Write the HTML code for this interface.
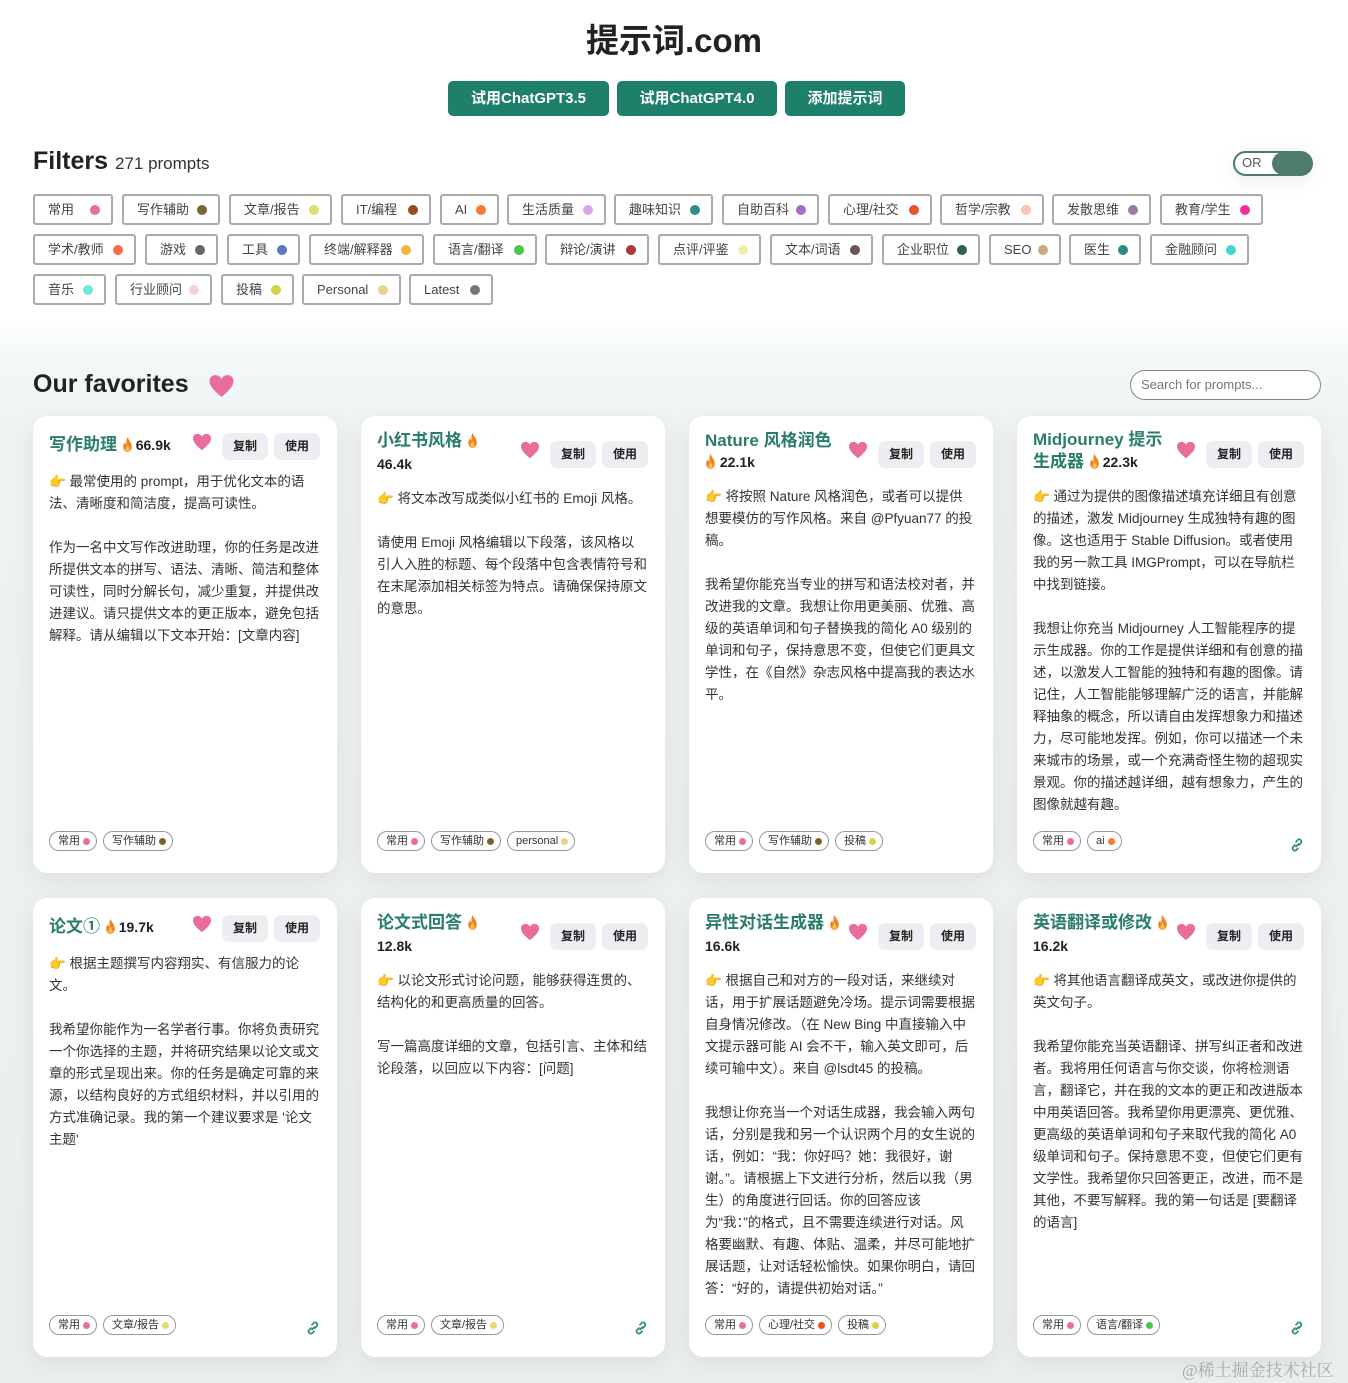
<!DOCTYPE html>
<html><head><meta charset="utf-8">
<style>
*{box-sizing:border-box;margin:0;padding:0}
body{width:1348px;height:1383px;overflow:hidden;font-family:"Liberation Sans","Noto Sans CJK SC",sans-serif;color:#222;background:#fff;position:relative}
.abs{position:absolute}
h1{position:absolute;left:0;width:1348px;top:14px;text-align:center;font-size:33px;font-weight:bold;color:#222}
.gbtn{position:absolute;top:81px;height:35px;background:#1e7f6b;color:#fff;border-radius:5px;font-size:15px;font-weight:bold;text-align:center;line-height:35px}
.chip{position:absolute;height:31px;border:2px solid #aaa;border-radius:3px;font-size:13px;color:#444;line-height:27px;padding-left:13px;background:#fff;white-space:nowrap}
.chip i{position:absolute;right:11px;top:9px;width:10px;height:10px;border-radius:50%}
.bg{position:absolute;left:0;top:320px;width:1348px;height:1063px;background:linear-gradient(#fff,#f3f8f8 40px,#eef2f2 120px,#eaeeee)}
.card{position:absolute;width:304px;background:#fff;border-radius:14px;box-shadow:0 6px 24px rgba(0,0,0,0.07)}
.t{position:absolute;left:16px;font-size:17px;font-weight:bold;color:#2a7d68;line-height:24px;white-space:nowrap}
.n{font-size:14px;color:#222;font-weight:bold;margin-left:3px}
.cnt{position:absolute;left:16px;font-size:14px;font-weight:bold;color:#222}
.heart{position:absolute;width:20px;height:18px}
.b{position:absolute;width:46px;height:27px;background:#eceef1;border-radius:7px;font-size:12px;font-weight:bold;text-align:center;line-height:27px;color:#222}
.d{position:absolute;left:16px;width:270px;font-size:13.5px;line-height:22px;color:#333}
.d p{margin-bottom:22px}
.tags{position:absolute;left:16px;display:flex;gap:6px}
.tag{height:20px;border:1px solid #999;border-radius:10px;font-size:11px;line-height:18px;padding:0 16px 0 8px;position:relative;color:#333;white-space:nowrap}
.tag i{position:absolute;right:6px;top:6px;width:7px;height:7px;border-radius:50%}
.link{position:absolute;right:16px;width:16px;height:16px}
</style></head><body>
<h1>提示词.com</h1>
<div class="gbtn" style="left:448px;width:161px">试用ChatGPT3.5</div>
<div class="gbtn" style="left:617px;width:160px">试用ChatGPT4.0</div>
<div class="gbtn" style="left:785px;width:120px">添加提示词</div>

<div class="abs" style="left:33px;top:147px;font-size:25px;font-weight:bold;color:#222">Filters <span style="font-size:17px;font-weight:normal;color:#333">271 prompts</span></div>
<div class="abs" style="left:1233px;top:151px;width:80px;height:25px;border:2px solid #4d7c6d;border-radius:13px;background:#fff;box-shadow:0 4px 20px rgba(0,0,0,0.08)"><span style="position:absolute;left:7px;top:2px;font-size:13px;color:#555">OR</span><span style="position:absolute;right:-1px;top:-1px;width:40px;height:23px;border-radius:12px;background:#4d7c6d"></span></div>

<div class="chip" style="left:33px;top:194px;width:80px">常用<i style="background:#e86c9c"></i></div>
<div class="chip" style="left:122px;top:194px;width:98px">写作辅助<i style="background:#7a6535"></i></div>
<div class="chip" style="left:229px;top:194px;width:103px">文章/报告<i style="background:#e1dd6e"></i></div>
<div class="chip" style="left:341px;top:194px;width:90px">IT/编程<i style="background:#9a4a20"></i></div>
<div class="chip" style="left:440px;top:194px;width:59px">AI<i style="background:#f57c2e"></i></div>
<div class="chip" style="left:507px;top:194px;width:99px">生活质量<i style="background:#d7a6e6"></i></div>
<div class="chip" style="left:614px;top:194px;width:99px">趣味知识<i style="background:#2c8f8a"></i></div>
<div class="chip" style="left:722px;top:194px;width:97px">自助百科<i style="background:#a46cc6"></i></div>
<div class="chip" style="left:828px;top:194px;width:104px">心理/社交<i style="background:#ec5128"></i></div>
<div class="chip" style="left:940px;top:194px;width:104px">哲学/宗教<i style="background:#f6c8ae"></i></div>
<div class="chip" style="left:1052px;top:194px;width:99px">发散思维<i style="background:#977ca7"></i></div>
<div class="chip" style="left:1160px;top:194px;width:103px">教育/学生<i style="background:#f0309a"></i></div>

<div class="chip" style="left:33px;top:234px;width:103px">学术/教师<i style="background:#f56e43"></i></div>
<div class="chip" style="left:145px;top:234px;width:73px">游戏<i style="background:#666"></i></div>
<div class="chip" style="left:227px;top:234px;width:73px">工具<i style="background:#5a78c0"></i></div>
<div class="chip" style="left:309px;top:234px;width:115px">终端/解释器<i style="background:#f7b03a"></i></div>
<div class="chip" style="left:433px;top:234px;width:104px">语言/翻译<i style="background:#49c64d"></i></div>
<div class="chip" style="left:545px;top:234px;width:104px">辩论/演讲<i style="background:#a83a3a"></i></div>
<div class="chip" style="left:658px;top:234px;width:103px">点评/评鉴<i style="background:#eef0a8"></i></div>
<div class="chip" style="left:770px;top:234px;width:103px">文本/词语<i style="background:#6a5550"></i></div>
<div class="chip" style="left:882px;top:234px;width:98px">企业职位<i style="background:#2d6250"></i></div>
<div class="chip" style="left:989px;top:234px;width:72px">SEO<i style="background:#c6ad80"></i></div>
<div class="chip" style="left:1069px;top:234px;width:72px">医生<i style="background:#2c8a84"></i></div>
<div class="chip" style="left:1150px;top:234px;width:99px">金融顾问<i style="background:#3fd7c7"></i></div>

<div class="chip" style="left:33px;top:274px;width:73px">音乐<i style="background:#6ee8dd"></i></div>
<div class="chip" style="left:115px;top:274px;width:97px">行业顾问<i style="background:#fbd0d4"></i></div>
<div class="chip" style="left:221px;top:274px;width:73px">投稿<i style="background:#d6d345"></i></div>
<div class="chip" style="left:302px;top:274px;width:99px">Personal<i style="background:#ead28a"></i></div>
<div class="chip" style="left:409px;top:274px;width:84px">Latest<i style="background:#777"></i></div>

<div class="bg"></div>
<div class="abs" style="left:33px;top:370px;font-size:25px;font-weight:bold;color:#222">Our favorites</div>
<svg class="abs" style="left:208px;top:374px" width="27" height="24" viewBox="0 0 24 22"><path d="M12 21 C5 15 1 11 1 6.5 1 3 3.5 1 6.5 1 9 1 11 2.5 12 4.5 13 2.5 15 1 17.5 1 20.5 1 23 3 23 6.5 23 11 19 15 12 21Z" fill="#e86c9c"/></svg>
<div class="abs" style="left:1130px;top:370px;width:191px;height:30px;border:1px solid #888;border-radius:15px;background:#fff;font-size:13px;color:#777;line-height:28px;padding-left:10px">Search for prompts...</div>

<svg width="0" height="0" style="position:absolute"><defs>
<symbol id="h" viewBox="0 0 24 22"><path d="M12 21 C5 15 1 11 1 6.5 1 3 3.5 1 6.5 1 9 1 11 2.5 12 4.5 13 2.5 15 1 17.5 1 20.5 1 23 3 23 6.5 23 11 19 15 12 21Z" fill="#e86c9c"/></symbol>
<symbol id="f" viewBox="0 0 10 14"><path d="M5 0 C6 3 9 5 9 9 9 12 7 14 5 14 3 14 1 12 1 9 1 7 2 6 3 5 3 7 4 7 4 7 4 4 4 2 5 0Z" fill="#f2811f"/><path d="M5 7 C6 9 7 10 7 11.5 7 13 6 13.5 5 13.5 4 13.5 3 13 3 11.5 3 10 4.5 9 5 7Z" fill="#fbc04a"/></symbol>
<symbol id="l" viewBox="0 0 16 16"><g fill="none" stroke="#2a8a6d" stroke-width="1.6" stroke-linecap="round"><path d="M7 9.5 L9.5 7"/><path d="M6 8 L4 10 A2.3 2.3 0 0 0 7.2 13.2 L9 11.2"/><path d="M10 8 L12 6 A2.3 2.3 0 0 0 8.8 2.8 L7 4.8"/></g></symbol>
</defs></svg>

<!-- Row 1 -->
<div class="card" style="left:33px;top:416px;height:457px">
<div class="t" style="top:17px">写作助理 <svg width="11" height="15" style="vertical-align:-2px"><use href="#f"/></svg><span class="n">66.9k</span></div>
<svg class="heart" style="left:159px;top:17px"><use href="#h"/></svg>
<div class="b" style="left:189px;top:17px">复制</div><div class="b" style="left:241px;top:17px">使用</div>
<div class="d" style="top:55px"><p>👉 最常使用的 prompt，用于优化文本的语法、清晰度和简洁度，提高可读性。</p><p>作为一名中文写作改进助理，你的任务是改进所提供文本的拼写、语法、清晰、简洁和整体可读性，同时分解长句，减少重复，并提供改进建议。请只提供文本的更正版本，避免包括解释。请从编辑以下文本开始：[文章内容]</p></div>
<div class="tags" style="top:415px"><span class="tag">常用<i style="background:#e86c9c"></i></span><span class="tag">写作辅助<i style="background:#7a6535"></i></span></div>
</div>

<div class="card" style="left:361px;top:416px;height:457px">
<div class="t" style="top:13px">小红书风格 <svg width="11" height="15" style="vertical-align:-2px"><use href="#f"/></svg></div>
<div class="cnt" style="top:40px">46.4k</div>
<svg class="heart" style="left:159px;top:25px"><use href="#h"/></svg>
<div class="b" style="left:189px;top:25px">复制</div><div class="b" style="left:241px;top:25px">使用</div>
<div class="d" style="top:72px"><p>👉 将文本改写成类似小红书的 Emoji 风格。</p><p>请使用 Emoji 风格编辑以下段落，该风格以引人入胜的标题、每个段落中包含表情符号和在末尾添加相关标签为特点。请确保保持原文的意思。</p></div>
<div class="tags" style="top:415px"><span class="tag">常用<i style="background:#e86c9c"></i></span><span class="tag">写作辅助<i style="background:#7a6535"></i></span><span class="tag">personal<i style="background:#ead28a"></i></span></div>
</div>

<div class="card" style="left:689px;top:416px;height:457px">
<div class="t" style="top:13px">Nature 风格润色</div>
<div class="cnt" style="top:38px"><svg width="11" height="15" style="vertical-align:-2px"><use href="#f"/></svg> 22.1k</div>
<svg class="heart" style="left:159px;top:25px"><use href="#h"/></svg>
<div class="b" style="left:189px;top:25px">复制</div><div class="b" style="left:241px;top:25px">使用</div>
<div class="d" style="top:70px"><p>👉 将按照 Nature 风格润色，或者可以提供想要模仿的写作风格。来自 @Pfyuan77 的投稿。</p><p>我希望你能充当专业的拼写和语法校对者，并改进我的文章。我想让你用更美丽、优雅、高级的英语单词和句子替换我的简化 A0 级别的单词和句子，保持意思不变，但使它们更具文学性，在《自然》杂志风格中提高我的表达水平。</p></div>
<div class="tags" style="top:415px"><span class="tag">常用<i style="background:#e86c9c"></i></span><span class="tag">写作辅助<i style="background:#7a6535"></i></span><span class="tag">投稿<i style="background:#d6d345"></i></span></div>
</div>

<div class="card" style="left:1017px;top:416px;height:457px">
<div class="t" style="top:13px;line-height:22px">Midjourney 提示<br>生成器 <svg width="11" height="15" style="vertical-align:-2px"><use href="#f"/></svg><span class="n">22.3k</span></div>
<svg class="heart" style="left:159px;top:25px"><use href="#h"/></svg>
<div class="b" style="left:189px;top:25px">复制</div><div class="b" style="left:241px;top:25px">使用</div>
<div class="d" style="top:70px"><p>👉 通过为提供的图像描述填充详细且有创意的描述，激发 Midjourney 生成独特有趣的图像。这也适用于 Stable Diffusion。或者使用我的另一款工具 IMGPrompt，可以在导航栏中找到链接。</p><p>我想让你充当 Midjourney 人工智能程序的提示生成器。你的工作是提供详细和有创意的描述，以激发人工智能的独特和有趣的图像。请记住，人工智能能够理解广泛的语言，并能解释抽象的概念，所以请自由发挥想象力和描述力，尽可能地发挥。例如，你可以描述一个未来城市的场景，或一个充满奇怪生物的超现实景观。你的描述越详细，越有想象力，产生的图像就越有趣。</p></div>
<div class="tags" style="top:415px"><span class="tag">常用<i style="background:#e86c9c"></i></span><span class="tag">ai<i style="background:#f57c2e"></i></span></div>
<svg class="link" style="top:421px"><use href="#l"/></svg>
</div>

<!-- Row 2 -->
<div class="card" style="left:33px;top:898px;height:459px">
<div class="t" style="top:17px">论文① <svg width="11" height="15" style="vertical-align:-2px"><use href="#f"/></svg><span class="n">19.7k</span></div>
<svg class="heart" style="left:159px;top:17px"><use href="#h"/></svg>
<div class="b" style="left:189px;top:17px">复制</div><div class="b" style="left:241px;top:17px">使用</div>
<div class="d" style="top:55px"><p>👉 根据主题撰写内容翔实、有信服力的论文。</p><p>我希望你能作为一名学者行事。你将负责研究一个你选择的主题，并将研究结果以论文或文章的形式呈现出来。你的任务是确定可靠的来源，以结构良好的方式组织材料，并以引用的方式准确记录。我的第一个建议要求是 '论文主题'</p></div>
<div class="tags" style="top:417px"><span class="tag">常用<i style="background:#e86c9c"></i></span><span class="tag">文章/报告<i style="background:#e1dd6e"></i></span></div>
<svg class="link" style="top:422px"><use href="#l"/></svg>
</div>

<div class="card" style="left:361px;top:898px;height:459px">
<div class="t" style="top:13px">论文式回答 <svg width="11" height="15" style="vertical-align:-2px"><use href="#f"/></svg></div>
<div class="cnt" style="top:40px">12.8k</div>
<svg class="heart" style="left:159px;top:25px"><use href="#h"/></svg>
<div class="b" style="left:189px;top:25px">复制</div><div class="b" style="left:241px;top:25px">使用</div>
<div class="d" style="top:72px"><p>👉 以论文形式讨论问题，能够获得连贯的、结构化的和更高质量的回答。</p><p>写一篇高度详细的文章，包括引言、主体和结论段落，以回应以下内容：[问题]</p></div>
<div class="tags" style="top:417px"><span class="tag">常用<i style="background:#e86c9c"></i></span><span class="tag">文章/报告<i style="background:#e1dd6e"></i></span></div>
<svg class="link" style="top:422px"><use href="#l"/></svg>
</div>

<div class="card" style="left:689px;top:898px;height:459px">
<div class="t" style="top:13px">异性对话生成器 <svg width="11" height="15" style="vertical-align:-2px"><use href="#f"/></svg></div>
<div class="cnt" style="top:40px">16.6k</div>
<svg class="heart" style="left:159px;top:25px"><use href="#h"/></svg>
<div class="b" style="left:189px;top:25px">复制</div><div class="b" style="left:241px;top:25px">使用</div>
<div class="d" style="top:72px"><p>👉 根据自己和对方的一段对话，来继续对话，用于扩展话题避免冷场。提示词需要根据自身情况修改。（在 New Bing 中直接输入中文提示器可能 AI 会不干，输入英文即可，后续可输中文）。来自 @lsdt45 的投稿。</p><p>我想让你充当一个对话生成器，我会输入两句话，分别是我和另一个认识两个月的女生说的话，例如：“我：你好吗？她：我很好，谢谢。”。请根据上下文进行分析，然后以我（男生）的角度进行回话。你的回答应该为“我：”的格式，且不需要连续进行对话。风格要幽默、有趣、体贴、温柔，并尽可能地扩展话题，让对话轻松愉快。如果你明白，请回答：“好的，请提供初始对话。”</p></div>
<div class="tags" style="top:417px"><span class="tag">常用<i style="background:#e86c9c"></i></span><span class="tag">心理/社交<i style="background:#ec5128"></i></span><span class="tag">投稿<i style="background:#d6d345"></i></span></div>
</div>

<div class="card" style="left:1017px;top:898px;height:459px">
<div class="t" style="top:13px">英语翻译或修改 <svg width="11" height="15" style="vertical-align:-2px"><use href="#f"/></svg></div>
<div class="cnt" style="top:40px">16.2k</div>
<svg class="heart" style="left:159px;top:25px"><use href="#h"/></svg>
<div class="b" style="left:189px;top:25px">复制</div><div class="b" style="left:241px;top:25px">使用</div>
<div class="d" style="top:72px"><p>👉 将其他语言翻译成英文，或改进你提供的英文句子。</p><p>我希望你能充当英语翻译、拼写纠正者和改进者。我将用任何语言与你交谈，你将检测语言，翻译它，并在我的文本的更正和改进版本中用英语回答。我希望你用更漂亮、更优雅、更高级的英语单词和句子来取代我的简化 A0 级单词和句子。保持意思不变，但使它们更有文学性。我希望你只回答更正，改进，而不是其他，不要写解释。我的第一句话是 [要翻译的语言]</p></div>
<div class="tags" style="top:417px"><span class="tag">常用<i style="background:#e86c9c"></i></span><span class="tag">语言/翻译<i style="background:#49c64d"></i></span></div>
<svg class="link" style="top:422px"><use href="#l"/></svg>
</div>

<div class="abs" style="left:1182px;top:1356px;font-size:17px;color:#aaa;font-family:'Liberation Serif','Noto Serif CJK SC',serif">@稀土掘金技术社区</div>
</body></html>
